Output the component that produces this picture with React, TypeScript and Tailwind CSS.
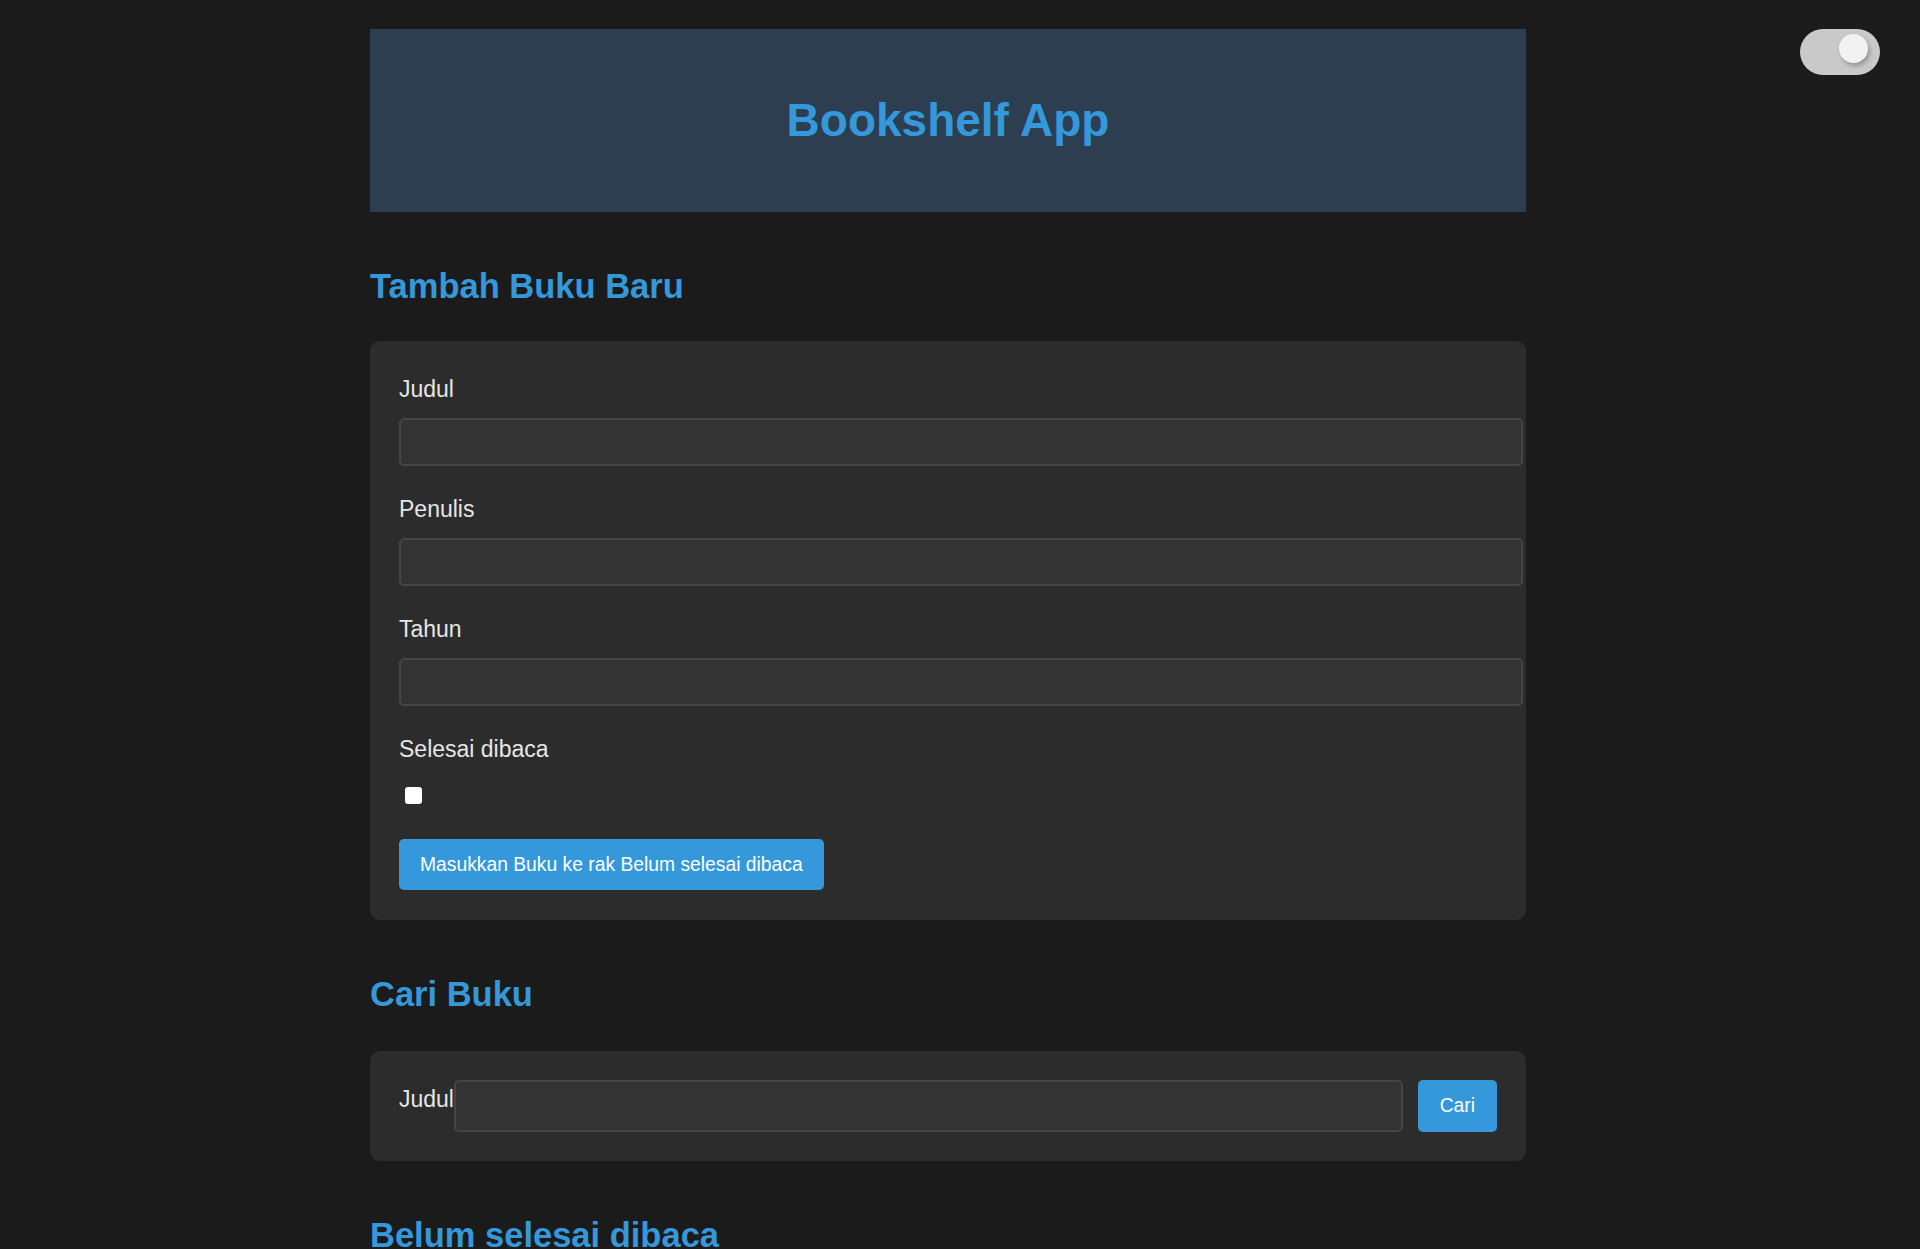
import React from "react";

const font = { fontFamily: '"Liberation Sans", Arial, sans-serif' };

const Field: React.FC<{ label: string; first?: boolean }> = ({ label, first }) => (
  <div className={first ? "" : "mt-[30px]"}>
    <label className="block text-[23px] leading-[26px] text-[#e6e6e6]">{label}</label>
    <input
      type="text"
      className="mt-[16px] block h-[48px] w-[calc(100%+26px)] rounded-[5px] border-2 border-[#454545] bg-[#333333] px-[12px] text-[19px] text-white outline-none"
    />
  </div>
);

export default function App() {
  return (
    <div className="relative min-h-screen bg-[#1b1b1b]" style={font}>
      {/* theme toggle */}
      <div className="absolute left-[1800px] top-[29px] h-[46px] w-[80px] rounded-full bg-[#c9c9c9]">
        <div className="absolute left-[39px] top-[5px] h-[29px] w-[29px] rounded-full bg-[#f2f2f2] shadow-[2px_3px_4px_rgba(0,0,0,0.25)]" />
      </div>

      <div className="ml-[370px] w-[1156px] pt-[29px]">
        {/* Header */}
        <header className="flex h-[183px] items-center justify-center bg-[#2c3e50]">
          <h1 className="text-[46px] font-bold text-[#3498db]">Bookshelf App</h1>
        </header>

        {/* Tambah Buku */}
        <h2 className="mt-[54px] text-[34.5px] font-bold leading-[40px] text-[#3498db]">Tambah Buku Baru</h2>
        <form
          className="mt-[35px] rounded-[10px] bg-[#2c2c2c] px-[29px] pb-[30px] pt-[35px]"
          onSubmit={(e) => e.preventDefault()}
        >
          <Field label="Judul" first />
          <Field label="Penulis" />
          <Field label="Tahun" />
          <div className="mt-[30px]">
            <label className="block text-[23px] leading-[26px] text-[#e6e6e6]">Selesai dibaca</label>
            <div className="mt-[25px] ml-[6px] h-[17px] w-[17px] rounded-[3px] bg-white" />
          </div>
          <button
            type="submit"
            className="mt-[35px] h-[51px] rounded-[5px] bg-[#3498db] px-[21px] pt-[2px] text-[19.3px] text-white"
          >
            Masukkan Buku ke rak Belum selesai dibaca
          </button>
        </form>

        {/* Cari Buku */}
        <h2 className="mt-[54px] text-[34.5px] font-bold leading-[40px] text-[#3498db]">Cari Buku</h2>
        <form
          className="mt-[37px] flex items-start rounded-[10px] bg-[#2c2c2c] p-[29px]"
          onSubmit={(e) => e.preventDefault()}
        >
          <label className="mt-[6px] text-[23px] leading-[26px] text-[#e6e6e6]">Judul</label>
          <input
            type="text"
            className="h-[52px] flex-1 rounded-[5px] border-2 border-[#454545] bg-[#333333] px-[12px] text-[19px] text-white outline-none"
          />
          <button
            type="submit"
            className="ml-[15px] h-[52px] rounded-[5px] bg-[#3498db] px-[22px] text-[19.3px] text-white"
          >
            Cari
          </button>
        </form>

        <h2 className="mt-[54px] pb-[60px] text-[34.5px] font-bold leading-[40px] text-[#3498db]">
          Belum selesai dibaca
        </h2>
      </div>
    </div>
  );
}
